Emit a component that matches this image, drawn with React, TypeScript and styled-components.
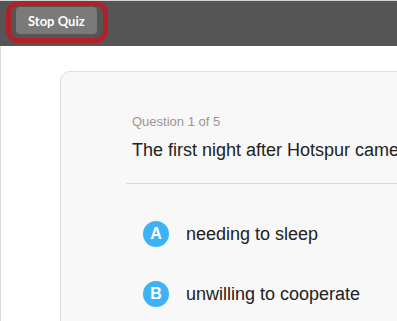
import React from "react";
import styled, { createGlobalStyle } from "styled-components";

const GlobalStyle = createGlobalStyle`
  html, body {
    margin: 0;
    padding: 0;
    background: #ffffff;
    overflow: hidden;
  }
  body {
    font-family: "Liberation Sans", Arial, sans-serif;
    width: 397px;
    height: 321px;
    border-top: 1px solid #d4d4d4;
    box-sizing: border-box;
  }
`;

const Page = styled.div`
  display: flex;
  flex-direction: column;
  width: 397px;
  height: 320px;
  overflow: hidden;
`;

const TopBar = styled.header`
  position: relative;
  flex: none;
  display: flex;
  align-items: flex-start;
  height: 45px;
  padding: 6px 0 0 16px;
  box-sizing: border-box;
  background: #555555;
`;

const StopButton = styled.button`
  height: 27px;
  padding: 0 12px;
  border: none;
  border-radius: 4px;
  background: #7a7a7a;
  color: #ffffff;
  font-family: Lato, "Liberation Sans", sans-serif;
  font-weight: 700;
  font-size: 13px;
  cursor: pointer;
`;

const HighlightRing = styled.div`
  position: absolute;
  left: 6px;
  top: 0px;
  width: 102px;
  height: 42px;
  box-sizing: border-box;
  border: 5px solid #b3202a;
  border-radius: 12px;
  pointer-events: none;
`;

const Main = styled.main`
  flex: 1;
  display: flex;
  padding: 25px 0 0 59px;
  border-left: 1px solid #dcdcdc;
  box-sizing: border-box;
  overflow: hidden;
`;

const Card = styled.section`
  flex: none;
  width: 360px;
  height: 270px;
  box-sizing: border-box;
  padding: 42px 0 0 65px;
  background: #f8f8f8;
  border: 1px solid #dedede;
  border-radius: 10px;
`;

const Header = styled.div`
  display: flex;
  flex-direction: column;
  gap: 11px;
  padding: 0 0 22px 6px;
  border-bottom: 1px solid #dcdcdc;
`;

const Counter = styled.div`
  font-size: 13px;
  line-height: 15px;
  color: #9a9590;
`;

const QuestionText = styled.div`
  font-size: 18px;
  line-height: 21px;
  color: #222222;
  white-space: nowrap;
`;

const Options = styled.ul`
  list-style: none;
  margin: 0;
  padding: 37px 0 0 17px;
  display: flex;
  flex-direction: column;
  gap: 34px;
`;

const Option = styled.li`
  display: flex;
  align-items: center;
  gap: 17px;
  height: 26px;
  cursor: pointer;
`;

const Badge = styled.span`
  flex: none;
  width: 26px;
  height: 26px;
  border-radius: 50%;
  background: #3db3f6;
  color: #ffffff;
  font-size: 16px;
  font-weight: 700;
  display: flex;
  align-items: center;
  justify-content: center;
`;

const OptionText = styled.span`
  font-size: 18px;
  color: #222222;
  white-space: nowrap;
`;

const options = [
  { letter: "A", text: "needing to sleep" },
  { letter: "B", text: "unwilling to cooperate" },
];

export default function App() {
  return (
    <>
      <GlobalStyle />
      <Page>
        <TopBar>
          <StopButton>Stop Quiz</StopButton>
          <HighlightRing />
        </TopBar>
        <Main>
          <Card>
            <Header>
              <Counter>Question 1 of 5</Counter>
              <QuestionText>The first night after Hotspur came</QuestionText>
            </Header>
            <Options>
              {options.map((o) => (
                <Option key={o.letter}>
                  <Badge>{o.letter}</Badge>
                  <OptionText>{o.text}</OptionText>
                </Option>
              ))}
            </Options>
          </Card>
        </Main>
      </Page>
    </>
  );
}
